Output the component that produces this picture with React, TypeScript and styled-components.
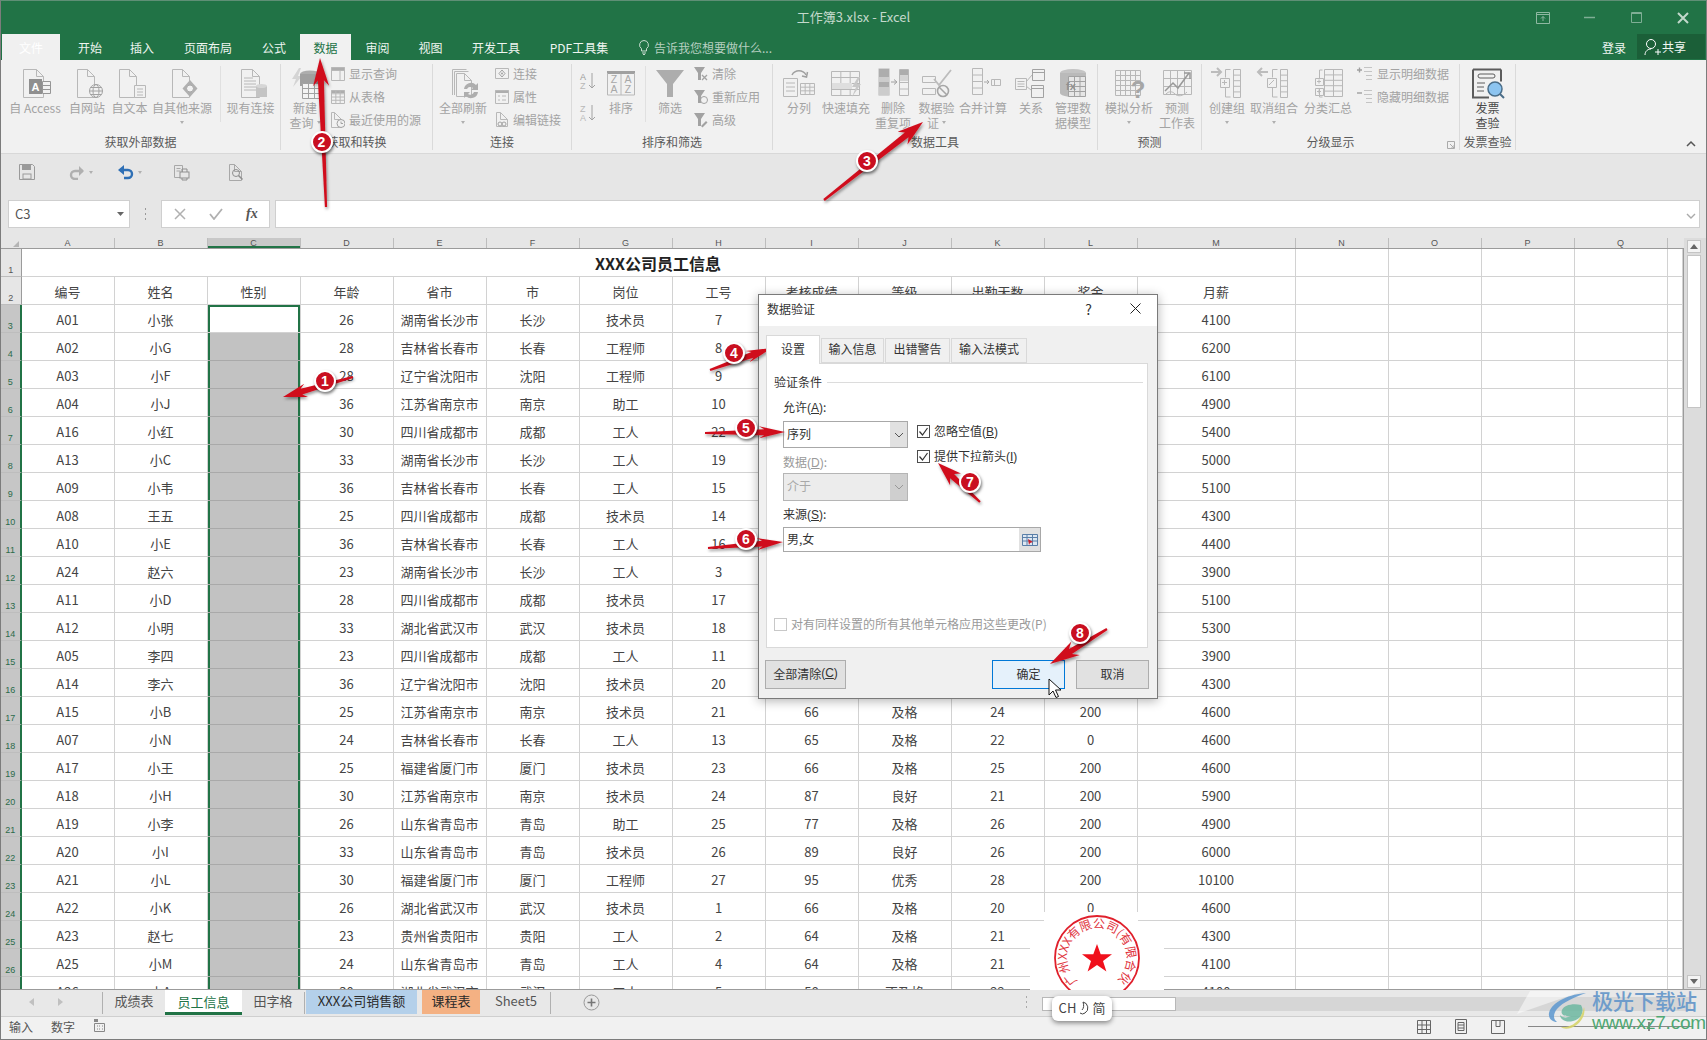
import React from "react";
import styled, { createGlobalStyle } from "styled-components";

const FONT = '"Noto Sans CJK SC", "Noto Sans", "Liberation Sans", sans-serif';
const G = "#b8b8b8";
const D = "#a2a2a2";

const Global = createGlobalStyle`
  html, body { margin: 0; padding: 0; background: #fff; }
  * { box-sizing: border-box; }
`;

const Win = styled.div`
  position: relative; width: 1707px; height: 1040px; overflow: hidden;
  display: flex; flex-direction: column; font-family: ${FONT}; font-size: 12px; color: #444;
  background: #e6e6e6; border: 1px solid #7c7c7c; border-top-color: #5f8f76;
`;
const TitleBar = styled.div`
  height: 33px; background: #217346; display: grid; grid-template-columns: 1fr auto 1fr; align-items: center;
`;
const TitleText = styled.div`grid-column: 2; color: #c4d9cc; font-size: 13px; padding-bottom: 2px;`;
const WinCtrls = styled.div`grid-column: 3; justify-self: end; display: flex;`;
const WinBtn = styled.div`
  width: 46.5px; height: 30px; display: flex; align-items: center; justify-content: center;
`;
const TabRow = styled.div`height: 26px; background: #217346; display: flex; align-items: stretch; padding-left: 1px;`;
const FileTab = styled.div`
  width: 58px; margin-right: 4px; background: #f0f0f0; color: #fff; display: flex; align-items: center; justify-content: center;
`;
const RibTab = styled.div<{ $w: number; $on?: boolean }>`
  width: ${p => p.$w}px; display: flex; align-items: center; justify-content: center;
  background: ${p => (p.$on ? "#f1f1f1" : "transparent")}; color: ${p => (p.$on ? "#217346" : "#eef5f0")};
`;
const TellMe = styled.div`display: flex; align-items: center; gap: 5px; margin-left: 16px; color: #b6cfc0;`;
const SignIn = styled.div`margin-left: auto; align-self: center; color: #f0f6f2; margin-right: 11px;`;
const Share = styled.div`
  width: 68px; margin: 0 1px 1px 0; background: #1b5f38; color: #f0f6f2; display: flex; align-items: center; gap: 1px; padding-left: 7px;
`;

const Ribbon = styled.div`
  height: 94px; background: #f1f1f1; border-bottom: 1px solid #d8d8d8; display: flex; padding-top: 4px; position: relative;
`;
const Group = styled.div<{ $w: number }>`
  width: ${p => p.$w}px; height: 86px; border-right: 1px solid #dadada; display: flex; flex-direction: column; position: relative; flex: none;
`;
const GroupBody = styled.div<{ $pl?: number }>`height: 70px; display: flex; padding-left: ${p => p.$pl ?? 0}px;`;
const GroupLabel = styled.div`height: 16px; line-height: 16px; text-align: center; color: #5a5a5a; margin-top: 2px;`;
const Launcher = styled.svg`position: absolute; right: 4px; bottom: 1px;`;
const ToolBox = styled.div<{ $w: number; $ml?: number; $dark?: boolean }>`
  width: ${p => p.$w}px; margin-left: ${p => p.$ml ?? 0}px; flex: none; display: flex; flex-direction: column; align-items: center;
  color: ${p => (p.$dark ? "#4a4a4a" : "#a3a3a3")}; white-space: nowrap;
`;
const ToolIcon = styled.div`height: 37px; display: flex; align-items: center; justify-content: center;`;
const ToolLine = styled.div`height: 14.5px; line-height: 14.5px; display: flex; align-items: center; gap: 3px;`;
const Caret = styled.span`
  display: inline-block; width: 0; height: 0; border-left: 2.5px solid transparent; border-right: 2.5px solid transparent; border-top: 3px solid #b0b0b0;
`;
const SmallCol = styled.div<{ $ml?: number }>`display: flex; flex-direction: column; margin-left: ${p => p.$ml ?? 0}px; margin-top: -2px; flex: none;`;
const SmallRow = styled.div`height: 23px; display: flex; align-items: center; gap: 4px; color: #a3a3a3; white-space: nowrap;`;
const SortCol = styled.div`display: flex; flex-direction: column; gap: 12px; padding: 7px 0 0 7px; flex: none;`;
const VSep = styled.div<{ $ml?: number; $mr?: number }>`
  width: 1px; height: 56px; margin: 2px ${p => p.$mr ?? 0}px 0 ${p => p.$ml ?? 0}px; background: #e0e0e0; flex: none;
`;
const Collapse = styled.div`align-self: flex-end; margin: 0 10px 3px auto;`;

const Qat = styled.div`height: 46px; background: #e6e6e6; display: flex; align-items: flex-start; padding-top: 9px;`;
const QatBtn = styled.div<{ $ml: number }>`margin-left: ${p => p.$ml}px; height: 18px; display: flex; align-items: center; gap: 4px;`;

const FormulaRow = styled.div`height: 28px; display: flex; background: #e6e6e6; padding: 0 6px 0 7px;`;
const Field = styled.div<{ $w?: number; $ml?: number }>`
  ${p => (p.$w ? `width:${p.$w}px;` : "flex:1;")} margin-left: ${p => p.$ml ?? 0}px; background: #fff; border: 1px solid #cfcfcf; display: flex; align-items: center; position: relative;
`;
const NameText = styled.span`font-size: 13px; color: #555; padding: 0 0 2px 6px; flex: 1;`;
const Dots = styled.div`width: 31px; display: flex; align-items: center; justify-content: center;`;
const FxIcons = styled.div`display: flex; align-items: center; width: 100%; padding-left: 12px; gap: 23px;`;
const FxMark = styled.i`font-family: "Liberation Serif", serif; font-size: 14px; font-weight: 700; color: #555;`;
const FormulaCaret = styled.div`margin-left: auto; margin-right: 2px;`;
const Gap10 = styled.div`height: 10px;`;

const SheetArea = styled.div`display: flex; height: 751px;`;
const SheetCol = styled.div`flex: 1; min-width: 0; display: flex; flex-direction: column;`;
const COLS = "20.5px repeat(12, 93px) 158px repeat(4, 93px) 1fr";
const ColHead = styled.div`
  height: 11px; display: grid; grid-template-columns: ${COLS}; background: #e6e6e6; border-bottom: 1px solid #9b9b9b;
`;
const Corner = styled.div`display: flex; align-items: flex-end; justify-content: flex-end; padding: 0 3px 1px 0;`;
const ColName = styled.div<{ $sel?: boolean }>`
  font-size: 9px; line-height: 10px; text-align: center; color: #555; font-family: "Liberation Sans", sans-serif;
  border-right: 1px solid #bdbdbd; background: ${p => (p.$sel ? "#c8c8c8" : "transparent")};
  box-shadow: ${p => (p.$sel ? "inset 0 -2px 0 #217346" : "none")};
`;
const Sheet = styled.div`
  flex: 1; min-height: 0; overflow: hidden; background: #fff; display: grid;
  grid-template-columns: ${COLS}; grid-auto-rows: 28px; align-content: start; border-right: 1px solid #9b9b9b;
`;
const RowHead = styled.div<{ $sel?: boolean }>`
  font-size: 9px; font-family: "Liberation Sans", sans-serif; color: ${p => (p.$sel ? "#2b6b4a" : "#555")};
  display: flex; align-items: flex-end; justify-content: center; padding-bottom: 1px;
  background: ${p => (p.$sel ? "#c6c6c6" : "#e6e6e6")}; border-bottom: 1px solid #bdbdbd;
  border-right: ${p => (p.$sel ? "2px solid #217346" : "1px solid #9b9b9b")};
`;
const Cell = styled.div<{ $sel?: "top" | "fill" }>`
  font-size: 13px; color: #444; display: flex; align-items: center; justify-content: center; padding-top: 1px;
  border-right: 1px solid #d2d2d2; border-bottom: 1px solid #d2d2d2; white-space: nowrap;
  ${p => p.$sel && `box-shadow: inset 2px 0 0 #217346, inset -2px 0 0 #217346${p.$sel === "top" ? ", inset 0 2px 0 #217346" : ""};`}
  ${p => p.$sel === "fill" && "background: #c2c2c2; border-bottom-color: #a9a9a9;"}
`;
const TitleCell = styled.div`
  grid-column: 2 / span 13; font-size: 16px; font-weight: 700; color: #222; display: flex; align-items: center; justify-content: center;
  border-right: 1px solid #d2d2d2; border-bottom: 1px solid #d2d2d2;
`;
const VScroll = styled.div`width: 22px; background: #dcdcdc; display: flex; flex-direction: column; align-items: center; padding: 2px 3px 1px 1px;`;
const ScrollBtn = styled.div`
  width: 14px; height: 13px; background: #f4f4f4; border: 1px solid #c4c4c4; display: flex; align-items: center; justify-content: center; flex: none;
`;
const ScrollThumb = styled.div`width: 14px; height: 153px; background: #fff; border: 1px solid #c4c4c4; margin-top: 2px;`;
const Spacer = styled.div`flex: 1;`;

const TabBar = styled.div`
  height: 28px; background: #e8e8e8; border-top: 1px solid #9b9b9b; border-bottom: 1px solid #cfcfcf; display: flex; align-items: flex-start;
`;
const NavArrows = styled.div`width: 101px; height: 24px; display: flex; align-items: center; gap: 24px; padding-left: 28px; flex: none;`;
const SheetTab = styled.div<{ $w: number; $bg?: string; $on?: boolean; $ml?: number }>`
  width: ${p => p.$w}px; height: ${p => (p.$on ? 25 : 24)}px; margin-left: ${p => p.$ml ?? 0}px; flex: none;
  display: flex; align-items: center; justify-content: center; font-size: 13px; padding-bottom: ${p => (p.$on ? 0 : 3)}px;
  background: ${p => p.$bg ?? "transparent"}; color: ${p => (p.$on ? "#217346" : p.$bg ? "#2a2a2a" : "#555")};
  border-bottom: ${p => (p.$on ? "3px solid #217346" : "none")};
`;
const TabSep = styled.div`width: 1px; height: 22px; margin-top: 2px; background: #b0b0b0; flex: none;`;
const AddSheet = styled.div`margin-left: 32px; height: 24px; display: flex; align-items: center;`;
const HDots = styled.div`height: 24px; display: flex; align-items: center; margin-right: 14px;`;
const HTrack = styled.div`
  width: 649px; height: 14px; margin: 7px 15px 0 0; background: #d6d6d6; display: flex;
`;
const HThumb = styled.div`width: 134px; height: 14px; background: #fff; border: 1px solid #b8b8b8;`;

const StatusBar = styled.div`
  height: 22px; background: #f1f1f1; display: flex; align-items: center; padding: 0 0 3px 8px; color: #555; position: relative;
`;
const StatusItem = styled.span<{ $ml?: number }>`margin-left: ${p => p.$ml ?? 0}px;`;
const ViewIcons = styled.div`margin-left: auto; display: flex; align-items: center; gap: 23px; margin-right: 13px;`;
const ZoomTrack = styled.div`width: 165px; height: 1px; background: #888; position: relative;`;
const ZoomKnob = styled.div`position: absolute; left: 120px; top: -4px; width: 2px; height: 9px; background: #888;`;

/* dialog */
const Dialog = styled.div`
  position: absolute; left: 757px; top: 293px; width: 400px; height: 405px; background: #f0f0f0; border: 1px solid #7a7a7a;
  box-shadow: 0 2px 10px rgba(0,0,0,.3); display: flex; flex-direction: column; color: #333;
`;
const DlgTitle = styled.div`height: 31px; background: #fff; display: flex; align-items: center; padding: 0 0 4px 8px; flex: none;`;
const DlgHelp = styled.span`margin-left: auto; margin-right: 38px; font-size: 14px; color: #333;`;
const DlgClose = styled.svg`margin-right: 16px;`;
const DlgBody = styled.div`padding: 9px 9px 0 7px; display: flex; flex-direction: column; flex: 1;`;
const DlgTabs = styled.div`display: flex; height: 28px; gap: 1px; position: relative; z-index: 1;`;
const DlgTab = styled.div<{ $w: number; $on?: boolean }>`
  width: ${p => p.$w}px; margin-top: ${p => (p.$on ? 0 : 3)}px; height: ${p => (p.$on ? 29 : 25)}px;
  background: ${p => (p.$on ? "#fff" : "#f0f0f0")}; border: 1px solid #d9d9d9; border-bottom: ${p => (p.$on ? "none" : "1px solid #d9d9d9")};
  display: flex; align-items: center; justify-content: center; padding-bottom: 4px;
`;
const Panel = styled.div`
  height: 285px; background: #fff; border: 1px solid #d9d9d9; padding: 9px 4px 15px 7px; display: flex; flex-direction: column;
`;
const Legend = styled.div`display: flex; align-items: center; height: 16px; gap: 5px;`;
const LegendLine = styled.div`flex: 1; height: 1px; background: #dcdcdc; margin-top: 2px;`;
const FormArea = styled.div`padding: 11px 0 0 9px; display: flex; flex-direction: column;`;
const FormTop = styled.div`display: flex;`;
const FormLeft = styled.div`width: 125px; display: flex; flex-direction: column;`;
const FormRight = styled.div`margin-left: 9px; padding-top: 23px; display: flex; flex-direction: column; gap: 9px;`;
const FieldLabel = styled.div<{ $off?: boolean; $mt?: number }>`
  height: 16px; line-height: 14px; margin-top: ${p => p.$mt ?? 0}px; color: ${p => (p.$off ? "#9a9a9a" : "#333")};
`;
const Select = styled.div<{ $off?: boolean; $h: number; $mt: number }>`
  height: ${p => p.$h}px; margin-top: ${p => p.$mt}px; border: 1px solid ${p => (p.$off ? "#b5b5b5" : "#a8a8a8")};
  background: ${p => (p.$off ? "#ececec" : "#fff")}; color: ${p => (p.$off ? "#a8a8a8" : "#333")};
  display: flex; align-items: center; padding-left: 3px; font-size: 12px;
`;
const SelectText = styled.span`padding-bottom: 3px;`;
const SelectBtn = styled.div<{ $off?: boolean }>`
  margin-left: auto; width: 17px; height: 100%; background: ${p => (p.$off ? "#cfcfcf" : "#e1e1e1")}; display: flex; align-items: center; justify-content: center;
`;
const SourceBox = styled.div`
  width: 258px; height: 25px; margin-top: 4px; border: 1px solid #a8a8a8; display: flex; align-items: center; padding-left: 3px; font-size: 12px;
`;
const SourceBtn = styled.div`margin-left: auto; width: 21px; height: 100%; background: #e1e1e1; display: flex; align-items: center; justify-content: center;`;
const CheckRow = styled.div<{ $off?: boolean }>`
  display: flex; align-items: center; gap: 4px; height: 16px; color: ${p => (p.$off ? "#9a9a9a" : "#333")}; margin-top: ${p => (p.$off ? "auto" : 0)};
`;
const CheckText = styled.span`padding-bottom: 2px;`;
const CheckBox = styled.div<{ $off?: boolean }>`
  width: 13px; height: 13px; border: 1px solid ${p => (p.$off ? "#c8c8c8" : "#4c4c4c")}; background: #fff; display: flex; align-items: center; justify-content: center; flex: none;
`;
const DlgFooter = styled.div`display: flex; padding: 12px 0 0 0; margin: 0 -1px 0 -1px;`;
const DlgButton = styled.div<{ $w: number; $primary?: boolean; $ml?: string }>`
  width: ${p => p.$w}px; height: 29px; margin-left: ${p => p.$ml ?? "0"}; display: flex; align-items: center; justify-content: center; padding-bottom: 3px;
  background: ${p => (p.$primary ? "#e5f1fb" : "#e1e1e1")}; border: 1px solid ${p => (p.$primary ? "#0078d7" : "#adadad")}; color: #333;
`;
const Acc = styled.span`font-family: "Liberation Sans", sans-serif; font-size: 12px;`;

/* overlays */
const Overlay = styled.svg`position: absolute; left: -1px; top: -1px; pointer-events: none; overflow: visible;`;
const Badge = styled.div<{ $x: number; $y: number }>`
  position: absolute; left: ${p => p.$x - 12}px; top: ${p => p.$y - 12}px; width: 22px; height: 22px; border-radius: 50%;
  background: #c90f20; border: 2px solid #fff; box-shadow: 1px 2px 3px rgba(0,0,0,.5); color: #fff;
  font-family: "Liberation Sans", sans-serif; font-weight: 700; font-size: 14px; display: flex; align-items: center; justify-content: center;
`;
const Stamp = styled.svg`position: absolute; left: 1029px; top: 911px;`;
const Ime = styled.div`
  position: absolute; left: 1051px; top: 995px; width: 60px; height: 25px; background: #fff; border-radius: 6px;
  box-shadow: 0 2px 5px rgba(0,0,0,.45); display: flex; align-items: center; justify-content: center; gap: 3px; font-size: 13px; color: #444; padding-bottom: 2px;
`;
const Cursor = styled.svg`position: absolute; left: 1047px; top: 677px;`;
const Mark = styled.div`position: absolute; left: 1545px; top: 988px; width: 160px; height: 44px; pointer-events: none;`;
const MarkLogo = styled.svg`position: absolute; left: 0; top: 2px; overflow: visible;`;
const MarkCn = styled.div`
  position: absolute; left: 46px; top: -3px; font-size: 21px; line-height: 28px; font-weight: 500; color: #6e9ccb; white-space: nowrap;
`;
const MarkEn = styled.div`
  position: absolute; left: 46px; top: 23px; font-size: 19px; line-height: 22px; color: #4fa873; white-space: nowrap; font-family: "Liberation Sans", sans-serif; letter-spacing: -.2px;
`;

/* icons */
const page = (x: number, y: number, w: number, h: number) =>
  `M${x + .5} ${y + .5}h${w - 7}l7 7v${h - 7}h-${w}zM${x + w - 6.5} ${y + .5}v7h7`;
const Stroke = ({ d, c = G }: { d: string; c?: string }) => <path d={d} fill="none" stroke={c} />;
const Ico = ({ w = 36, h = 36, children }: { w?: number; h?: number; children: React.ReactNode }) => (
  <svg width={w} height={h} viewBox={`0 0 ${w} ${h}`}>{children}</svg>
);
const grid = (x: number, y: number, w: number, h: number, cols: number, rows: number) => {
  let s = `M${x + .5} ${y + .5}h${w}v${h}h-${w}z`;
  for (let i = 1; i < cols; i++) s += `M${x + .5 + (w * i) / cols} ${y}v${h}`;
  for (let i = 1; i < rows; i++) s += `M${x} ${y + .5 + (h * i) / rows}h${w}`;
  return s;
};
const IAccess = () => (
  <Ico>
    <Stroke d={page(6, 4, 20, 28)} />
    <rect x="12" y="14" width="13" height="15" fill="#8f8f8f" />
    <text x="18.5" y="26" fontSize="11" fontWeight="700" fill="#fff" textAnchor="middle" fontFamily="Liberation Sans">A</text>
    <path d="M25.500 16.500h8v12h-8z" fill="#f1f1f1" stroke="#969696" />
    <path d="M25 20.500h9M25 24.500h9" stroke="#969696" />
  </Ico>
);
const IWeb = () => (
  <Ico>
    <Stroke d={page(8, 4, 17, 28)} />
    <circle cx="27" cy="26" r="6.500" fill="#f1f1f1" stroke={D} />
    <ellipse cx="27" cy="26" rx="3" ry="6.500" fill="none" stroke={D} />
    <path d="M20.500 26h13M21.500 22.500h11M21.500 29.500h11" stroke={D} />
  </Ico>
);
const IText = () => (
  <Ico>
    <Stroke d={page(7, 4, 17, 28)} />
    <path d="M22.500 20.500h11v12h-11z" fill="#f1f1f1" stroke={G} />
    <path d="M25 24h6M25 27h6M25 30h6" stroke={G} />
  </Ico>
);
const IOther = () => (
  <Ico>
    <Stroke d={page(8, 4, 17, 28)} />
    <path d="M26 15l7.500 8.500-7.500 8.500-7.500-8.500z" fill="#b0b0b0" />
    <circle cx="26" cy="23.500" r="3.500" fill="#f1f1f1" stroke="#a8a8a8" />
  </Ico>
);
const IExisting = () => (
  <Ico>
    <Stroke d={page(8, 4, 18, 28)} />
    <Stroke d="M11 13h9M11 16h12M11 19h12M11 22h12M11 25h12" />
    <path d="M23 21h11v11H23z" fill="#c4c4c4" />
    <ellipse cx="28.500" cy="21" rx="5.500" ry="2" fill="#d6d6d6" />
  </Ico>
);
const INewQuery = () => (
  <Ico>
    <path d="M12 3L5 14h4l-3 8 9-11h-4l3-8z" fill="#d4d4d4" />
    <ellipse cx="23" cy="9" rx="10" ry="3.500" fill="#adadad" />
    <path d="M13 9h20v12H13z" fill="#a0a0a0" />
    <path d="M15.500 18.500h18v15h-18z" fill="#f4f4f4" stroke={D} />
    <path d="M15.500 23.500h18M15.500 28.500h18M21.500 18.500v15M27.500 18.500v15" stroke={D} />
  </Ico>
);
const IRefresh = () => (
  <Ico>
    <Stroke d="M7.500 30V4.500h14" />
    <Stroke d="M9.500 30V6.500h14" />
    <Stroke d={page(11, 8, 15, 23)} />
    <path d="M19 24a7 7 0 0 1 12-4l2-2v7h-7l2-2a4 4 0 0 0-6 1zM33 27a7 7 0 0 1-12 4l-2 2v-6h6l-2 2a4 4 0 0 0 6-2z" fill="#aeaeae" />
  </Ico>
);
const IAZ = ({ up }: { up?: boolean }) => (
  <Ico w={18} h={20}>
    <text x="1" y="9" fontSize="9" fill={up ? "#9a9a9a" : "#b8b8b8"} fontFamily="Liberation Sans">{up ? "A" : "Z"}</text>
    <text x="1" y="18" fontSize="9" fill="#b8b8b8" fontFamily="Liberation Sans">{up ? "Z" : "A"}</text>
    <path d="M13 2v15M10 14l3 3 3-3" fill="none" stroke="#a2a2a2" />
  </Ico>
);
const ISort = () => (
  <Ico w={30} h={30}>
    <rect x="1" y="3" width="28" height="3" fill="#a0a0a0" />
    <Stroke d="M1.500 5v22h27V5M15 6v21" />
    <g fontSize="10.500" fill="#a8a8a8" fontFamily="Liberation Sans" textAnchor="middle">
      <text x="8" y="15">Z</text><text x="22" y="15">A</text><text x="8" y="25">A</text><text x="22" y="25">Z</text>
    </g>
  </Ico>
);
const IFunnel = () => (
  <Ico w={30} h={32}>
    <path d="M1 3h28L18 17v13h-6V17z" fill="#adadad" />
  </Ico>
);
const MiniFunnel = ({ kind }: { kind: "x" | "r" | "p" }) => (
  <Ico w={14} h={16}>
    <path d="M0 1h11L7 7v7H4V7z" fill="#a2a2a2" />
    {kind === "x" && <path d="M8 9l5 5M13 9l-5 5" stroke="#a2a2a2" strokeWidth="1.300" />}
    {kind === "r" && <circle cx="10" cy="11" r="3.500" fill="none" stroke="#a2a2a2" />}
    {kind === "p" && <path d="M7 14l5-5 1.500 1.500-5 5z" fill="#a2a2a2" />}
  </Ico>
);
const ISplit = () => (
  <Ico>
    <Stroke d="M2.500 13.500h14v18h-14zM5 18h9M5 22h9M5 26h9" />
    <Stroke d={grid(19, 18, 14, 11, 3, 3)} />
    <path d="M11 10a8 8 0 0 1 14 0" fill="none" stroke="#a0a0a0" strokeWidth="1.500" />
    <path d="M21 11l4.500 1 1-5" fill="none" stroke="#a0a0a0" strokeWidth="1.500" />
  </Ico>
);
const IFlash = () => (
  <Ico>
    <Stroke d={grid(3, 6, 28, 24, 3, 4)} />
    <rect x="4" y="18" width="20" height="6" fill="#dedede" />
    <path d="M30 12l-6 10h4l-4 10 9-13h-4l3-7z" fill="#c8c8c8" />
  </Ico>
);
const IDupes = () => (
  <Ico>
    <rect x="4" y="4" width="10" height="26" fill="#fff" stroke={G} />
    <rect x="4" y="4" width="10" height="8" fill="#adadad" />
    <rect x="4" y="12" width="10" height="5" fill="#cccccc" />
    <rect x="4" y="17" width="10" height="5" fill="#adadad" />
    <rect x="4" y="22" width="10" height="8" fill="#cccccc" />
    <path d="M16 17h5M19 14.500l3 2.500-3 2.500" fill="none" stroke="#a0a0a0" />
    <Stroke d={grid(24, 4, 9, 26, 1, 4)} />
    <rect x="25" y="5" width="8" height="5" fill="#adadad" />
    <rect x="25" y="11" width="8" height="5" fill="#d4d4d4" />
  </Ico>
);
const IValidate = () => (
  <Ico>
    <Stroke d="M3.500 11.500h13v6h-13zM3.500 23.500h13v6h-13z" />
    <path d="M15 14l5 6L32 5" fill="none" stroke="#bcbcbc" strokeWidth="1.800" />
    <circle cx="24" cy="26" r="5.500" fill="#f1f1f1" stroke="#a6a6a6" strokeWidth="1.600" />
    <path d="M20 22l8 8" stroke="#a6a6a6" strokeWidth="1.600" />
  </Ico>
);
const IConsolidate = () => (
  <Ico>
    <Stroke d={grid(7, 3, 10, 26, 1, 4)} />
    <path d="M19 17h5M22 15l2 2-2 2" fill="none" stroke="#a8a8a8" />
    <Stroke d="M26.500 14.500h9v6h-9zM29.500 14.500v6" />
  </Ico>
);
const IRelation = () => (
  <Ico>
    <Stroke d="M2.500 13.500h11v11h-11zM4.500 16.500h7M4.500 19h7M4.500 21.500h7" />
    <path d="M19.500 4.500h12v11h-12zM19.500 7.500h12" fill="#f1f1f1" stroke={D} />
    <path d="M18.500 20.500h12v12h-12zM18.500 23.500h12" fill="#f1f1f1" stroke={D} />
    <path d="M13 17l6-7M13 21l5 4" stroke={G} />
  </Ico>
);
const IModel = () => (
  <Ico>
    <ellipse cx="18" cy="8" rx="13" ry="4" fill="#c4c4c4" />
    <path d="M5 8v20c0 2 6 4 13 4s13-2 13-4V8z" fill="#bababa" />
    <path d="M13.500 11.500h17v20h-17zM13.500 16.500h17M13.500 21.500h17M13.500 26.500h17M19.500 11.500v20M25 11.500v20" fill="#e6e6e6" stroke="#a2a2a2" />
    <text x="11" y="25" fontSize="11" fontWeight="700" fill="#909090" fontFamily="Liberation Sans">fx</text>
  </Ico>
);
const IWhatIf = () => (
  <Ico>
    <Stroke d={grid(4, 5, 25, 25, 5, 5)} />
    <text x="27" y="33" fontSize="24" fontWeight="700" fill="#a6a6a6" textAnchor="middle" fontFamily="Liberation Sans">?</text>
  </Ico>
);
const IForecast = () => (
  <Ico>
    <Stroke d={grid(4, 5, 28, 24, 4, 3)} />
    <path d="M6 26l8-8 5 5 11-15" fill="none" stroke="#989898" strokeWidth="1.500" />
    <path d="M25 8h6v6" fill="none" stroke="#989898" strokeWidth="1.500" />
    <path d="M7 29c3-3 6-3 9 0s8 2 12-2" fill="none" stroke={G} />
  </Ico>
);
const IGroup = ({ ungroup }: { ungroup?: boolean }) => (
  <Ico>
    <path d={ungroup ? "M12 7H2M6 3L2 7l4 4" : "M2 7h10M8 3l4 4-4 4"} fill="none" stroke="#bcbcbc" strokeWidth="2" />
    <Stroke d="M21.500 4.500h-5v8M16.500 22v10h5" />
    <Stroke d={grid(11, 13, 9, 9, 1, 1)} />
    <Stroke d={ungroup ? "M13 20l5-5" : "M13 17.500h5M15.500 15v5"} />
    <Stroke d={grid(24, 4, 7, 28, 1, 5)} />
  </Ico>
);
const ISubtotal = () => (
  <Ico>
    <Stroke d="M9.500 13v-8h3M9.500 23v9h3" />
    <Stroke d={grid(5, 13, 8, 7, 1, 1)} />
    <Stroke d={grid(5, 23, 8, 7, 1, 1)} />
    <Stroke d="M7 16.500h4M9 14.500v4M7 26.500h4M9 24.500v4" />
    <Stroke d={grid(14, 4, 18, 27, 2, 5)} />
  </Ico>
);
const IInvoice = () => (
  <Ico w={36} h={34}>
    <path d="M3 3.500h28M3 3.500v28h16M31 3.500v12" fill="none" stroke="#5c5c5c" strokeWidth="2" />
    <rect x="8" y="8" width="17" height="4" rx="2" fill="none" stroke="#5c5c5c" />
    <path d="M7 17h8M7 21h7M7 25h7" stroke="#5c5c5c" />
    <circle cx="25" cy="23" r="7" fill="#8cc4f0" stroke="#4a6d88" strokeWidth="1.500" />
    <path d="M30 28l4 4" stroke="#4a6d88" strokeWidth="2" />
  </Ico>
);
const Small = ({ children }: { children: React.ReactNode }) => <Ico w={14} h={16}>{children}</Ico>;
const STable = ({ half }: { half?: boolean }) => (
  <Small>
    <rect x=".5" y="1" width="13" height="3" fill="#adadad" />
    <Stroke d={half ? "M.5 1.500h13v13H.5zM.5 4.500h13M9 4.500v10" : grid(0, 1, 13, 13, 3, 4)} />
  </Small>
);
const SRecent = () => (
  <Small>
    <Stroke d={page(0, 0, 10, 15)} />
    <circle cx="10" cy="11.500" r="4" fill="#f1f1f1" stroke={D} />
    <path d="M10 9.500v2h2" fill="none" stroke={D} />
  </Small>
);
const SConnect = () => (
  <Small>
    <Stroke d="M.500 2.500h13v10H.500z" />
    <path d="M7 4l3 3.500-3 3.500-3-3.500z" fill="none" stroke={D} />
    <circle cx="7" cy="7.500" r="1" fill={D} />
  </Small>
);
const SProps = () => (
  <Small>
    <rect x=".5" y="1" width="13" height="3" fill="#adadad" />
    <Stroke d="M.500 1.500h13v13H.500zM3 7h2M7 7h4M3 11h2M7 11h4" />
  </Small>
);
const SLinks = () => (
  <Small>
    <Stroke d={page(1, 0, 11, 14)} />
    <path d="M3 12a2 2 0 0 1 4 0a2 2 0 0 1-4 0zM7 12a2 2 0 0 1 4 0a2 2 0 0 1-4 0z" fill="#f1f1f1" stroke={D} />
  </Small>
);
const SDetail = ({ plus }: { plus?: boolean }) => (
  <Ico w={16} h={16}>
    <path d={plus ? "M0 4h5M2.500 1.500v5" : "M0 4h5"} stroke="#a0a0a0" strokeWidth="1.400" />
    <path d="M7 1.500h8M7 5.500h8M9 9.500h6M9 13.500h6" stroke="#c4c4c4" />
  </Ico>
);
const Tick = () => (
  <svg width="11" height="11"><path d="M1.500 5.500l3 3.500 5-7" fill="none" stroke="#333" strokeWidth="1.200" /></svg>
);

const Tool = ({ w, ml, icon, l1, l2, caret, dark }: { w: number; ml?: number; icon: React.ReactNode; l1: string; l2?: string; caret?: boolean; dark?: boolean }) => (
  <ToolBox $w={w} $ml={ml} $dark={dark}>
    <ToolIcon>{icon}</ToolIcon>
    <ToolLine>{l1}</ToolLine>
    <ToolLine>{l2}{caret && <Caret />}</ToolLine>
  </ToolBox>
);

const P = (t: string, k: string) => <>{t}<Acc>(<u>{k}</u>)</Acc></>;

const rows: (string | number)[][] = [
  ["A01","小张",26,"湖南省长沙市","长沙","技术员",7,"","","","",4100],
  ["A02","小G",28,"吉林省长春市","长春","工程师",8,"","","","",6200],
  ["A03","小F",28,"辽宁省沈阳市","沈阳","工程师",9,"","","","",6100],
  ["A04","小J",36,"江苏省南京市","南京","助工",10,"","","","",4900],
  ["A16","小红",30,"四川省成都市","成都","工人",22,"","","","",5400],
  ["A13","小C",33,"湖南省长沙市","长沙","工人",19,"","","","",5000],
  ["A09","小韦",36,"吉林省长春市","长春","工人",15,"","","","",5100],
  ["A08","王五",25,"四川省成都市","成都","技术员",14,"","","","",4300],
  ["A10","小E",36,"吉林省长春市","长春","工人",16,"","","","",4400],
  ["A24","赵六",23,"湖南省长沙市","长沙","工人",3,"","","","",3900],
  ["A11","小D",28,"四川省成都市","成都","技术员",17,"","","","",5100],
  ["A12","小明",33,"湖北省武汉市","武汉","技术员",18,"","","","",5300],
  ["A05","李四",23,"四川省成都市","成都","工人",11,"","","","",3900],
  ["A14","李六",36,"辽宁省沈阳市","沈阳","技术员",20,"","","","",4300],
  ["A15","小B",25,"江苏省南京市","南京","技术员",21,66,"及格",24,200,4600],
  ["A07","小N",24,"吉林省长春市","长春","工人",13,65,"及格",22,0,4600],
  ["A17","小王",25,"福建省厦门市","厦门","技术员",23,66,"及格",25,200,4600],
  ["A18","小H",30,"江苏省南京市","南京","技术员",24,87,"良好",21,200,5900],
  ["A19","小李",26,"山东省青岛市","青岛","助工",25,77,"及格",26,200,4900],
  ["A20","小I",33,"山东省青岛市","青岛","技术员",26,89,"良好",26,200,6000],
  ["A21","小L",30,"福建省厦门市","厦门","工程师",27,95,"优秀",28,200,10100],
  ["A22","小K",26,"湖北省武汉市","武汉","技术员",1,66,"及格",20,0,4600],
  ["A23","赵七",23,"贵州省贵阳市","贵阳","工人",2,64,"及格",21,"",4300],
  ["A25","小M",24,"山东省青岛市","青岛","工人",4,64,"及格",21,"",4100],
  ["A26","小A",30,"湖北省武汉市","武汉","工人",5,58,"不及格",22,"",4100],
];
const headers = ["编号","姓名","性别","年龄","省市","市","岗位","工号","考核成绩","等级","出勤天数","奖金","月薪"];
const cols = "ABCDEFGHIJKLMNOPQ".split("");

const arrows = [
  { a: [353, 377], b: [283, 397], h: 24, w: 7 },
  { a: [326, 207], b: [320, 58], h: 28, w: 8 },
  { a: [824, 200], b: [923, 122], h: 26, w: 8 },
  { a: [710, 370], b: [772, 348], h: 26, w: 6 },
  { a: [705, 433], b: [785, 432], h: 26, w: 6 },
  { a: [708, 548], b: [783, 542], h: 26, w: 6 },
  { a: [980, 502], b: [938, 463], h: 24, w: 8 },
  { a: [1107, 629], b: [1050, 664], h: 30, w: 8 },
];
const badges = [[325, 381], [321.5, 142], [867, 161], [734, 353], [746, 428], [746, 539], [970, 482], [1080, 633]];
const arrowPoints = ({ a, b, h, w }: typeof arrows[number]) => {
  const dx = b[0] - a[0], dy = b[1] - a[1], len = Math.hypot(dx, dy);
  const ux = dx / len, uy = dy / len, nx = -uy, ny = ux;
  const at = (along: number, off: number) => `${(b[0] - ux * along + nx * off).toFixed(1)},${(b[1] - uy * along + ny * off).toFixed(1)}`;
  return [at(len, 1.1), at(h * .8, 3), at(h, w), at(0, 0), at(h, -w), at(h * .8, -3), at(len, -1.1)].join(" ");
};

export default function App() {
  return (
    <Win>
      <Global />
      <TitleBar>
        <TitleText>工作簿3.xlsx - Excel</TitleText>
        <WinCtrls>
          <WinBtn>
            <svg width="14" height="12"><path d="M.5.5h13v11H.5zM.5 2.500h13M7 9V4.500M5 6.500l2-2 2 2" fill="none" stroke="#8fb8a2" /></svg>
          </WinBtn>
          <WinBtn><svg width="11" height="3"><path d="M0 1.500h11" stroke="#7fae95" strokeWidth="1.500" /></svg></WinBtn>
          <WinBtn><svg width="11" height="11"><path d="M.5.5h10v10H.5zM.5 1.500h10" fill="none" stroke="#7fae95" /></svg></WinBtn>
          <WinBtn><svg width="12" height="12"><path d="M1 1l10 10M11 1L1 11" stroke="#c2d8cb" strokeWidth="2" /></svg></WinBtn>
        </WinCtrls>
      </TitleBar>
      <TabRow>
        <FileTab>文件</FileTab>
        <RibTab $w={52}>开始</RibTab>
        <RibTab $w={52}>插入</RibTab>
        <RibTab $w={80}>页面布局</RibTab>
        <RibTab $w={52}>公式</RibTab>
        <RibTab $w={51} $on>数据</RibTab>
        <RibTab $w={53}>审阅</RibTab>
        <RibTab $w={53}>视图</RibTab>
        <RibTab $w={78}>开发工具</RibTab>
        <RibTab $w={88}>PDF工具集</RibTab>
        <TellMe>
          <svg width="10" height="15"><path d="M5 .5a4.500 4.500 0 0 1 2.500 8.200V11h-5V8.700A4.500 4.500 0 0 1 5 .5zM3 13h4M4 14.500h2" fill="none" stroke="#c8dcd0" /></svg>
          告诉我您想要做什么...
        </TellMe>
        <SignIn>登录</SignIn>
        <Share>
          <svg width="17" height="18"><circle cx="7" cy="6" r="4.500" fill="none" stroke="#fff" /><path d="M1 17c0-4 3-6 6-6M11 14h6M14 11v6" fill="none" stroke="#fff" /></svg>
          共享
        </Share>
      </TabRow>
      <Ribbon>
        <Group $w={280}>
          <GroupBody $pl={7}>
            <Tool w={54} icon={<IAccess />} l1="自 Access" />
            <Tool w={50} icon={<IWeb />} l1="自网站" />
            <Tool w={35} icon={<IText />} l1="自文本" />
            <Tool w={70} icon={<IOther />} l1="自其他来源" caret />
            <VSep $ml={3} />
            <Tool w={59} icon={<IExisting />} l1="现有连接" />
          </GroupBody>
          <GroupLabel>获取外部数据</GroupLabel>
        </Group>
        <Group $w={152}>
          <GroupBody>
            <Tool w={48} icon={<INewQuery />} l1="新建" l2="查询" caret />
            <SmallCol $ml={2}>
              <SmallRow><STable half />显示查询</SmallRow>
              <SmallRow><STable />从表格</SmallRow>
              <SmallRow><SRecent />最近使用的源</SmallRow>
            </SmallCol>
          </GroupBody>
          <GroupLabel>获取和转换</GroupLabel>
        </Group>
        <Group $w={139}>
          <GroupBody>
            <Tool w={60} icon={<IRefresh />} l1="全部刷新" caret />
            <SmallCol $ml={2}>
              <SmallRow><SConnect />连接</SmallRow>
              <SmallRow><SProps />属性</SmallRow>
              <SmallRow><SLinks />编辑链接</SmallRow>
            </SmallCol>
          </GroupBody>
          <GroupLabel>连接</GroupLabel>
        </Group>
        <Group $w={201}>
          <GroupBody>
            <SortCol>
              <IAZ up />
              <IAZ />
            </SortCol>
            <Tool w={34} ml={7} icon={<ISort />} l1="排序" />
            <VSep $ml={7} $mr={2} />
            <Tool w={44} icon={<IFunnel />} l1="筛选" />
            <SmallCol $ml={2}>
              <SmallRow><MiniFunnel kind="x" />清除</SmallRow>
              <SmallRow><MiniFunnel kind="r" />重新应用</SmallRow>
              <SmallRow><MiniFunnel kind="p" />高级</SmallRow>
            </SmallCol>
          </GroupBody>
          <GroupLabel>排序和筛选</GroupLabel>
        </Group>
        <Group $w={325}>
          <GroupBody $pl={4}>
            <Tool w={44} icon={<ISplit />} l1="分列" />
            <Tool w={50} icon={<IFlash />} l1="快速填充" />
            <Tool w={44} icon={<IDupes />} l1="删除" l2="重复项" />
            <Tool w={43} icon={<IValidate />} l1="数据验" l2="证" caret />
            <Tool w={50} icon={<IConsolidate />} l1="合并计算" />
            <Tool w={46} icon={<IRelation />} l1="关系" />
            <Tool w={38} icon={<IModel />} l1="管理数" l2="据模型" />
          </GroupBody>
          <GroupLabel>数据工具</GroupLabel>
        </Group>
        <Group $w={104}>
          <GroupBody $pl={6}>
            <Tool w={50} icon={<IWhatIf />} l1="模拟分析" caret />
            <Tool w={46} icon={<IForecast />} l1="预测" l2="工作表" />
          </GroupBody>
          <GroupLabel>预测</GroupLabel>
        </Group>
        <Group $w={258}>
          <GroupBody $pl={2}>
            <Tool w={46} icon={<IGroup />} l1="创建组" caret />
            <Tool w={48} icon={<IGroup ungroup />} l1="取消组合" caret />
            <Tool w={60} icon={<ISubtotal />} l1="分类汇总" />
            <SmallCol $ml={-1}>
              <SmallRow><SDetail plus />显示明细数据</SmallRow>
              <SmallRow><SDetail />隐藏明细数据</SmallRow>
            </SmallCol>
          </GroupBody>
          <GroupLabel>分级显示</GroupLabel>
          <Launcher width="8" height="8"><path d="M.5 7.500v-7h7v7zM3 3l4 4M4 7h3V4" fill="none" stroke="#aaa" /></Launcher>
        </Group>
        <Group $w={56}>
          <GroupBody>
            <Tool w={55} icon={<IInvoice />} l1="发票" l2="查验" dark />
          </GroupBody>
          <GroupLabel>发票查验</GroupLabel>
        </Group>
        <Collapse><svg width="10" height="7"><path d="M1 6l4-4 4 4" fill="none" stroke="#555" strokeWidth="1.500" /></svg></Collapse>
      </Ribbon>
      <Qat>
        <QatBtn $ml={18}>
          <svg width="16" height="16"><path d="M.5.5h13l2 2v13H.5z" fill="none" stroke="#9a9a9a" /><rect x="3" y="1" width="9" height="5" fill="#9a9a9a" /><rect x="4" y="10" width="8" height="5" fill="none" stroke="#9a9a9a" /></svg>
        </QatBtn>
        <QatBtn $ml={33}>
          <svg width="17" height="15"><path d="M15 6H7a4 4 0 0 0 0 8h3" fill="none" stroke="#b0b0b0" strokeWidth="2.400" /><path d="M11 1l5 5-5 5z" fill="#b0b0b0" /></svg>
          <Caret />
        </QatBtn>
        <QatBtn $ml={24}>
          <svg width="17" height="16"><path d="M3 6h8a4 4 0 0 1 0 8H7" fill="none" stroke="#2e6fb5" strokeWidth="2.400" /><path d="M7 1L1 6l6 5z" fill="#2e6fb5" /></svg>
          <Caret />
        </QatBtn>
        <QatBtn $ml={31}>
          <svg width="17" height="17"><path d="M1.500 1.500h8v12h-8z" fill="none" stroke="#a8a8a8" /><path d="M3.500 4.500h4M3.500 7h4" stroke="#a8a8a8" /><rect x="7" y="8" width="9" height="6" fill="#e6e6e6" stroke="#8f8f8f" /><path d="M9 8V5h5v3M9 14v2h5v-2" fill="none" stroke="#8f8f8f" /></svg>
        </QatBtn>
        <QatBtn $ml={38}>
          <svg width="17" height="18"><path d={page(1, 1, 12, 16)} fill="none" stroke="#a8a8a8" /><circle cx="8" cy="10" r="3.500" fill="none" stroke="#8f8f8f" /><path d="M10.500 12.500l4 4" stroke="#8f8f8f" strokeWidth="1.600" /></svg>
        </QatBtn>
      </Qat>
      <FormulaRow>
        <Field $w={122}>
          <NameText>C3</NameText>
          <svg width="14" height="6"><path d="M2 1h7L5.500 5z" fill="#666" /></svg>
        </Field>
        <Dots><svg width="3" height="14"><path d="M1.500 1v2M1.500 6v2M1.500 11v2" stroke="#999" /></svg></Dots>
        <Field $w={109}>
          <FxIcons>
            <svg width="12" height="12"><path d="M1 1l10 10M11 1L1 11" stroke="#b0b0b0" strokeWidth="1.500" /></svg>
            <svg width="14" height="12"><path d="M1 6l4 5 8-10" fill="none" stroke="#b0b0b0" strokeWidth="1.800" /></svg>
            <FxMark>fx</FxMark>
          </FxIcons>
        </Field>
        <Field $ml={5}>
          <FormulaCaret><svg width="12" height="8"><path d="M2 2l4 4 4-4" fill="none" stroke="#aaa" strokeWidth="1.400" /></svg></FormulaCaret>
        </Field>
      </FormulaRow>
      <Gap10 />
      <SheetArea>
        <SheetCol>
          <ColHead>
            <Corner><svg width="6" height="6"><path d="M6 0v6H0z" fill="#b5b5b5" /></svg></Corner>
            {cols.map(c => <ColName key={c} $sel={c === "C"}>{c}</ColName>)}
            <div />
          </ColHead>
          <Sheet>
            <RowHead>1</RowHead>
            <TitleCell>XXX公司员工信息</TitleCell>
            {[0, 1, 2, 3, 4].map(i => <Cell key={i} />)}
            <RowHead>2</RowHead>
            {headers.map(h => <Cell key={h}>{h}</Cell>)}
            {[0, 1, 2, 3, 4].map(i => <Cell key={i} />)}
            {rows.map((r, i) => (
              <React.Fragment key={i}>
                <RowHead $sel>{i + 3}</RowHead>
                <Cell>{r[0]}</Cell>
                <Cell>{r[1]}</Cell>
                <Cell $sel={i === 0 ? "top" : "fill"} />
                {r.slice(2).map((v, j) => <Cell key={j}>{v}</Cell>)}
                {[0, 1, 2, 3, 4].map(k => <Cell key={`e${k}`} />)}
              </React.Fragment>
            ))}
          </Sheet>
        </SheetCol>
        <VScroll>
          <ScrollBtn><svg width="8" height="5"><path d="M0 5l4-5 4 5z" fill="#666" /></svg></ScrollBtn>
          <ScrollThumb />
          <Spacer />
          <ScrollBtn><svg width="8" height="5"><path d="M0 0l4 5 4-5z" fill="#666" /></svg></ScrollBtn>
        </VScroll>
      </SheetArea>
      <TabBar>
        <NavArrows>
          <svg width="5" height="8"><path d="M5 0L0 4l5 4z" fill="#c0c0c0" /></svg>
          <svg width="5" height="8"><path d="M0 0l5 4-5 4z" fill="#c0c0c0" /></svg>
        </NavArrows>
        <TabSep />
        <SheetTab $w={62}>成绩表</SheetTab>
        <SheetTab $w={77} $on $bg="#fff">员工信息</SheetTab>
        <SheetTab $w={62}>田字格</SheetTab>
        <TabSep />
        <SheetTab $w={111} $ml={1} $bg="#b4d0ea">XXX公司销售额</SheetTab>
        <SheetTab $w={58} $ml={5} $bg="#f4b183">课程表</SheetTab>
        <SheetTab $w={68} $ml={2}>Sheet5</SheetTab>
        <TabSep />
        <AddSheet>
          <svg width="17" height="17"><circle cx="8.500" cy="8.500" r="7.500" fill="none" stroke="#999" /><path d="M4.500 8.500h8M8.500 4.500v8" stroke="#777" strokeWidth="1.600" /></svg>
        </AddSheet>
        <Spacer />
        <HDots><svg width="3" height="14"><path d="M1.500 1v2M1.500 6v2M1.500 11v2" stroke="#aaa" /></svg></HDots>
        <HTrack><HThumb /></HTrack>
      </TabBar>
      <StatusBar>
        <StatusItem>输入</StatusItem>
        <StatusItem $ml={18}>数字</StatusItem>
        <StatusItem $ml={18}>
          <svg width="13" height="14"><rect x="1" y="1" width="4" height="3" fill="#888" /><path d="M1.500 5.500h10v8h-10zM4 8h1M6 8h1M9 8h1M4 11h1M6 11h1M9 11h1" fill="none" stroke="#888" /></svg>
        </StatusItem>
        <ViewIcons>
          <svg width="14" height="15"><path d="M.5 1.500h13v13H.5zM5 1.500v13M9.500 1.500v13M.5 6h13M.5 10.500h13" fill="none" stroke="#666" /></svg>
          <svg width="14" height="15"><path d="M1.500 .5h11v14h-11zM4 3.500h6v8H4zM4 6h6M4 9h6" fill="none" stroke="#666" /></svg>
          <svg width="14" height="15"><path d="M.5 1.500h13v13H.5zM5 1.500v6h4v-6" fill="none" stroke="#666" /></svg>
          <ZoomTrack><ZoomKnob /></ZoomTrack>
        </ViewIcons>
      </StatusBar>

      <Stamp width="134" height="78" viewBox="0 0 134 78">
        <path d="M14 0h94v11h26v67H0V11h14z" fill="#fff" />
        <ellipse cx="67" cy="46" rx="42" ry="42" fill="none" stroke="#e0202c" strokeWidth="1.800" />
        <defs><path id="stampArc" d="M47.700 69A30 30 0 1 1 86.300 69" /></defs>
        <text fontSize="12" fill="#e0303a" fontFamily={FONT}>
          <textPath href="#stampArc">广州XXX有限公司(有限合伙)</textPath>
        </text>
        <path d="M67 32l3.700 10.300H82l-9 6.600 3.400 10.600L67 53l-9.400 6.500L61 48.900l-9-6.600h11.300z" fill="#f0101c" />
      </Stamp>

      <Dialog>
        <DlgTitle>
          数据验证
          <DlgHelp>?</DlgHelp>
          <DlgClose width="11" height="11"><path d="M.5.5l10 10M10.500.5l-10 10" stroke="#222" /></DlgClose>
        </DlgTitle>
        <DlgBody>
          <DlgTabs>
            <DlgTab $w={54} $on>设置</DlgTab>
            <DlgTab $w={63}>输入信息</DlgTab>
            <DlgTab $w={65}>出错警告</DlgTab>
            <DlgTab $w={76}>输入法模式</DlgTab>
          </DlgTabs>
          <Panel>
            <Legend>验证条件<LegendLine /></Legend>
            <FormArea>
              <FormTop>
                <FormLeft>
                  <FieldLabel>{P("允许", "A")}:</FieldLabel>
                  <Select $h={27} $mt={5}>
                    <SelectText>序列</SelectText>
                    <SelectBtn><svg width="10" height="6"><path d="M1 1l4 4 4-4" fill="none" stroke="#555" /></svg></SelectBtn>
                  </Select>
                  <FieldLabel $off $mt={7}>{P("数据", "D")}:</FieldLabel>
                  <Select $off $h={28} $mt={2}>
                    <SelectText>介于</SelectText>
                    <SelectBtn $off><svg width="10" height="6"><path d="M1 1l4 4 4-4" fill="none" stroke="#999" /></svg></SelectBtn>
                  </Select>
                </FormLeft>
                <FormRight>
                  <CheckRow><CheckBox><Tick /></CheckBox><CheckText>{P("忽略空值", "B")}</CheckText></CheckRow>
                  <CheckRow><CheckBox><Tick /></CheckBox><CheckText>{P("提供下拉箭头", "I")}</CheckText></CheckRow>
                </FormRight>
              </FormTop>
              <FieldLabel $mt={6}>{P("来源", "S")}:</FieldLabel>
              <SourceBox>
                <SelectText>男,女</SelectText>
                <SourceBtn>
                  <svg width="16" height="14"><path d="M.5 1.500h15v11H.5zM.5 4.500h15M.5 8h15M5 1.500v11M10.500 1.500v11" fill="#dde7f2" stroke="#5a7fa8" /><path d="M6 6l5 3-3 1-1 2z" fill="#c8202c" /></svg>
                </SourceBtn>
              </SourceBox>
            </FormArea>
            <CheckRow $off><CheckBox $off /><CheckText>对有同样设置的所有其他单元格应用这些更改(P)</CheckText></CheckRow>
          </Panel>
          <DlgFooter>
            <DlgButton $w={81}>{P("全部清除", "C")}</DlgButton>
            <DlgButton $w={73} $primary $ml="auto">确定</DlgButton>
            <DlgButton $w={73} $ml="11px">取消</DlgButton>
          </DlgFooter>
        </DlgBody>
      </Dialog>
      <Cursor width="14" height="21"><path d="M1 1v16l4-4 3 6.500 2.500-1L7.500 12H13z" fill="#fff" stroke="#111" /></Cursor>

      <Overlay width="1707" height="1040">
        <defs>
          <filter id="as" x="-20%" y="-20%" width="140%" height="140%"><feDropShadow dx="1" dy="2" stdDeviation="1.500" floodColor="#000" floodOpacity=".4" /></filter>
        </defs>
        {arrows.map((a, i) => <polygon key={i} points={arrowPoints(a)} fill="#d0101f" filter="url(#as)" />)}
      </Overlay>
      {badges.map(([x, y], i) => <Badge key={i} $x={x} $y={y}>{i + 1}</Badge>)}

      <Ime>CH
        <svg width="10" height="14"><path d="M4 1a6 6 0 0 1 2 11 4 4 0 0 1-5 0M4 1c1 3 1 6-1 8" fill="none" stroke="#444" /></svg>
        简
      </Ime>
      <Mark>
        <MarkLogo width="46" height="40" viewBox="0 0 46 40">
          <path d="M-16 0H37L-29 23z" fill="#fff" opacity=".5" />
          <path d="M40 2C25 3 6 10 3 22c-1 5 3 9 8 9-4-3-4-8 0-13C17 11 29 6 40 2z" fill="#5c96cf" opacity=".85" />
          <path d="M35 14c-8-2-17 0-19 5s3 7 9 6c-4 2-9 2-11-1 0 4 5 8 13 6 8-2 12-9 8-16z" fill="#6cb7a0" opacity=".85" />
          <path d="M38 16c2 8-3 17-13 21-4 1-8 1-10-1 10 1 20-5 23-20z" fill="#d6d46a" opacity=".9" />
        </MarkLogo>
        <MarkCn>极光下载站</MarkCn>
        <MarkEn>www.xz7.com</MarkEn>
      </Mark>
    </Win>
  );
}
